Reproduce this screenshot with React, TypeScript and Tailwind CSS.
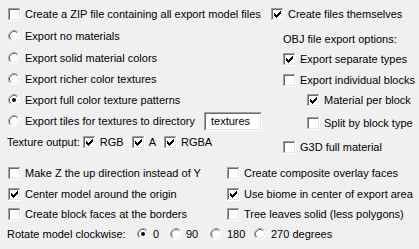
import React from "react";

function Check({ checked = false }: { checked?: boolean }) {
  const pts = [
    [0, 2], [1, 3], [2, 4], [3, 3], [4, 2], [5, 1], [6, 0],
  ];
  return (
    <svg width="13" height="13" viewBox="0 0 13 13" className="shrink-0 block" shapeRendering="crispEdges">
      <rect x="0" y="0" width="13" height="13" fill="#ffffff" />
      <rect x="0" y="0" width="12" height="1" fill="#a0a0a0" />
      <rect x="0" y="0" width="1" height="12" fill="#a0a0a0" />
      <rect x="1" y="1" width="10" height="1" fill="#696969" />
      <rect x="1" y="1" width="1" height="10" fill="#696969" />
      <rect x="1" y="11" width="11" height="1" fill="#e3e3e3" />
      <rect x="11" y="1" width="1" height="11" fill="#e3e3e3" />
      {checked &&
        pts.map(([x, y], i) => (
          <rect key={i} x={3 + x} y={3 + y} width="1" height="3" fill="#000000" />
        ))}
    </svg>
  );
}

function Radio({ checked = false }: { checked?: boolean }) {
  return (
    <svg width="12" height="12" viewBox="0 0 12 12" className="shrink-0 block">
      <circle cx="6" cy="6" r="5.5" fill="#ffffff" />
      <path d="M 2.11 9.89 A 5.5 5.5 0 0 1 9.89 2.11" fill="none" stroke="#a0a0a0" strokeWidth="1" />
      <path d="M 9.89 2.11 A 5.5 5.5 0 0 1 2.11 9.89" fill="none" stroke="#ffffff" strokeWidth="1" />
      <path d="M 2.82 9.18 A 4.5 4.5 0 0 1 9.18 2.82" fill="none" stroke="#696969" strokeWidth="1" />
      <path d="M 9.18 2.82 A 4.5 4.5 0 0 1 2.82 9.18" fill="none" stroke="#e3e3e3" strokeWidth="1" />
      {checked && <circle cx="6" cy="6" r="2" fill="#000000" />}
    </svg>
  );
}

function CheckRow({ label, checked, className = "" }: { label: string; checked?: boolean; className?: string }) {
  return (
    <div className={"h-[20px] flex items-center " + className}>
      <Check checked={checked} />
      <span className="ml-[4px] whitespace-nowrap">{label}</span>
    </div>
  );
}

function RadioRow({ label, checked, className = "" }: { label: string; checked?: boolean; className?: string }) {
  return (
    <div className={"h-[20px] flex items-center " + className}>
      <Radio checked={checked} />
      <span className="ml-[5px] whitespace-nowrap">{label}</span>
    </div>
  );
}

export default function App() {
  return (
    <div className="w-[419px] h-[249px] bg-[#f0f0f0] text-black text-[11px] leading-[13px] font-['Liberation_Sans',Arial,sans-serif] overflow-hidden">
      <div className="flex h-[157px]">
        <div className="w-[271px] pl-[8px] pt-[4px] flex flex-col">
          <CheckRow label="Create a ZIP file containing all export model files" />
          <RadioRow className="mt-[2px]" label="Export no materials" />
          <RadioRow className="mt-[2px]" label="Export solid material colors" />
          <RadioRow className="mt-[1px]" label="Export richer color textures" />
          <RadioRow className="mt-[1px]" label="Export full color texture patterns" checked />
          <div className="mt-[1px] h-[20px] flex items-center">
            <Radio />
            <span className="ml-[5px] whitespace-nowrap">Export tiles for textures to directory</span>
            <div className="ml-[9px] w-[58px] h-[19px] bg-white border-t border-l border-t-[#a0a0a0] border-l-[#a0a0a0] border-b border-r border-b-white border-r-white">
              <div className="w-full h-full border-t border-l border-t-[#696969] border-l-[#696969] border-b border-r border-b-[#e3e3e3] border-r-[#e3e3e3] pl-[5px] flex items-center">
                textures
              </div>
            </div>
          </div>
          <div className="mt-[1px] h-[20px] flex items-center -ml-[1px]">
            <span className="whitespace-nowrap">Texture output:</span>
            <span className="ml-[3px]"><Check checked /></span>
            <span className="ml-[4px]">RGB</span>
            <span className="ml-[8px]"><Check checked /></span>
            <span className="ml-[4px]">A</span>
            <span className="ml-[8px]"><Check checked /></span>
            <span className="ml-[4px]">RGBA</span>
          </div>
        </div>
        <div className="pt-[4px] flex flex-col">
          <CheckRow label="Create files themselves" checked />
          <div className="mt-[5px] h-[20px] flex items-center pl-[12px] whitespace-nowrap">OBJ file export options:</div>
          <CheckRow className="pl-[12px]" label="Export separate types" checked />
          <CheckRow className="mt-[1px] pl-[12px]" label="Export individual blocks" />
          <CheckRow className="pl-[36px]" label="Material per block" checked />
          <CheckRow className="mt-[3px] pl-[36px]" label="Split by block type" />
          <CheckRow className="mt-[4px] pl-[12px]" label="G3D full material" />
        </div>
      </div>
      <div className="mt-[6px] grid grid-cols-[219px_1fr] pl-[8px]">
        <div className="flex flex-col">
          <CheckRow label="Make Z the up direction instead of Y" />
          <CheckRow className="mt-[1px]" label="Center model around the origin" checked />
          <CheckRow label="Create block faces at the borders" />
        </div>
        <div className="flex flex-col">
          <CheckRow label="Create composite overlay faces" />
          <CheckRow className="mt-[1px]" label="Use biome in center of export area" checked />
          <CheckRow label="Tree leaves solid (less polygons)" />
        </div>
      </div>
      <div className="h-[20px] flex items-center pl-[7px]">
        <span className="w-[130px] whitespace-nowrap">Rotate model clockwise:</span>
        <div className="w-[33px] flex items-center">
          <Radio checked />
          <span className="ml-[4px]">0</span>
        </div>
        <div className="w-[40px] flex items-center">
          <Radio />
          <span className="ml-[4px]">90</span>
        </div>
        <div className="w-[44px] flex items-center">
          <Radio />
          <span className="ml-[5px]">180</span>
        </div>
        <div className="flex items-center">
          <Radio />
          <span className="ml-[5px] whitespace-nowrap">270 degrees</span>
        </div>
      </div>
    </div>
  );
}
